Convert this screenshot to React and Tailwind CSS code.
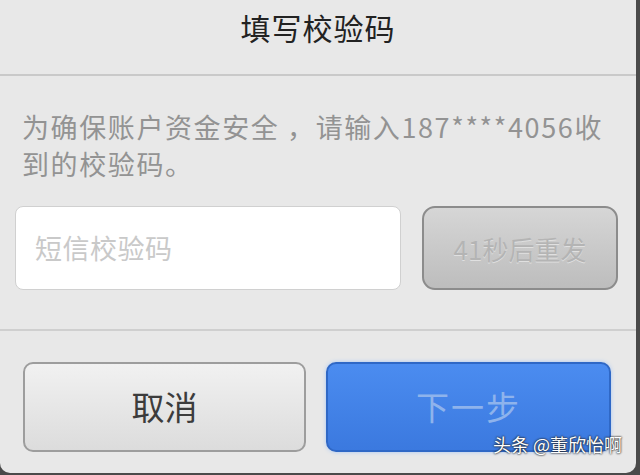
export default function App() {
  const font = { fontFamily: '"Noto Sans CJK SC", "Liberation Sans", sans-serif' };
  return (
    <div className="w-[640px] h-[475px] bg-[#4a4a4a] overflow-hidden" style={font}>
      <div className="relative w-[636px] h-[473px] bg-[#e8e8e8] rounded-b-[10px] flex flex-col">
        {/* title */}
        <div className="h-[74px] flex items-start justify-center pt-[6px]">
          <h1 className="text-[30px] leading-[42px] text-[#222] tracking-[1px]">填写校验码</h1>
        </div>
        <div className="h-[2px] bg-[#c9c9c9]" />

        {/* message */}
        <div className="mt-[32px] pl-[22px] text-[27px] leading-[37px] text-[#939393] tracking-[1.6px] whitespace-nowrap">
          <p>为确保账户资金安全 ，请输入187****4056收</p>
          <p>到的校验码。</p>
        </div>

        {/* code row */}
        <div className="mt-[24px] flex items-center pl-[15px] pr-[18px] gap-[21px]">
          <div className="w-[386px] h-[84px] bg-white rounded-[8px] border border-[#d0d0d0] flex items-center pl-[19px]">
            <span className="text-[27px] text-[#c9c9c9] tracking-[0.5px]">短信校验码</span>
          </div>
          <div className="w-[196px] h-[84px] rounded-[13px] border-2 border-[#8c8c8c] bg-gradient-to-b from-[#d6d6d6] to-[#bdbdbd] flex items-center justify-center">
            <span className="text-[26px] text-[#b4b4b4] [text-shadow:0_1px_0_#e0e0e0]">41秒后重发</span>
          </div>
        </div>

        <div className="mt-[39px] h-[2px] bg-[#cfcfcf]" />

        {/* actions */}
        <div className="mt-[31px] flex pl-[23px] gap-[20px]">
          <div className="w-[283px] h-[90px] rounded-[10px] border-2 border-[#9d9d9d] bg-gradient-to-b from-[#f1f1f1] to-[#dcdcdc] flex items-center justify-center">
            <span className="text-[33px] text-[#3c3c3c]">取消</span>
          </div>
          <div className="w-[285px] h-[90px] rounded-[10px] border-2 border-[#2f68c6] bg-gradient-to-b from-[#4b8cf0] to-[#3b79df] shadow-[0_0_4px_#a9c8f5] flex items-center justify-center">
            <span className="text-[33px] text-[#8eb3ec] tracking-[2px]">下一步</span>
          </div>
        </div>

        {/* watermark */}
        <div className="absolute right-[14px] bottom-[18px] text-[18px] leading-[22px] text-white [text-shadow:0_0_2px_#222,0_0_2px_#222]">
          头条 @董欣怡啊
        </div>
      </div>
    </div>
  );
}
